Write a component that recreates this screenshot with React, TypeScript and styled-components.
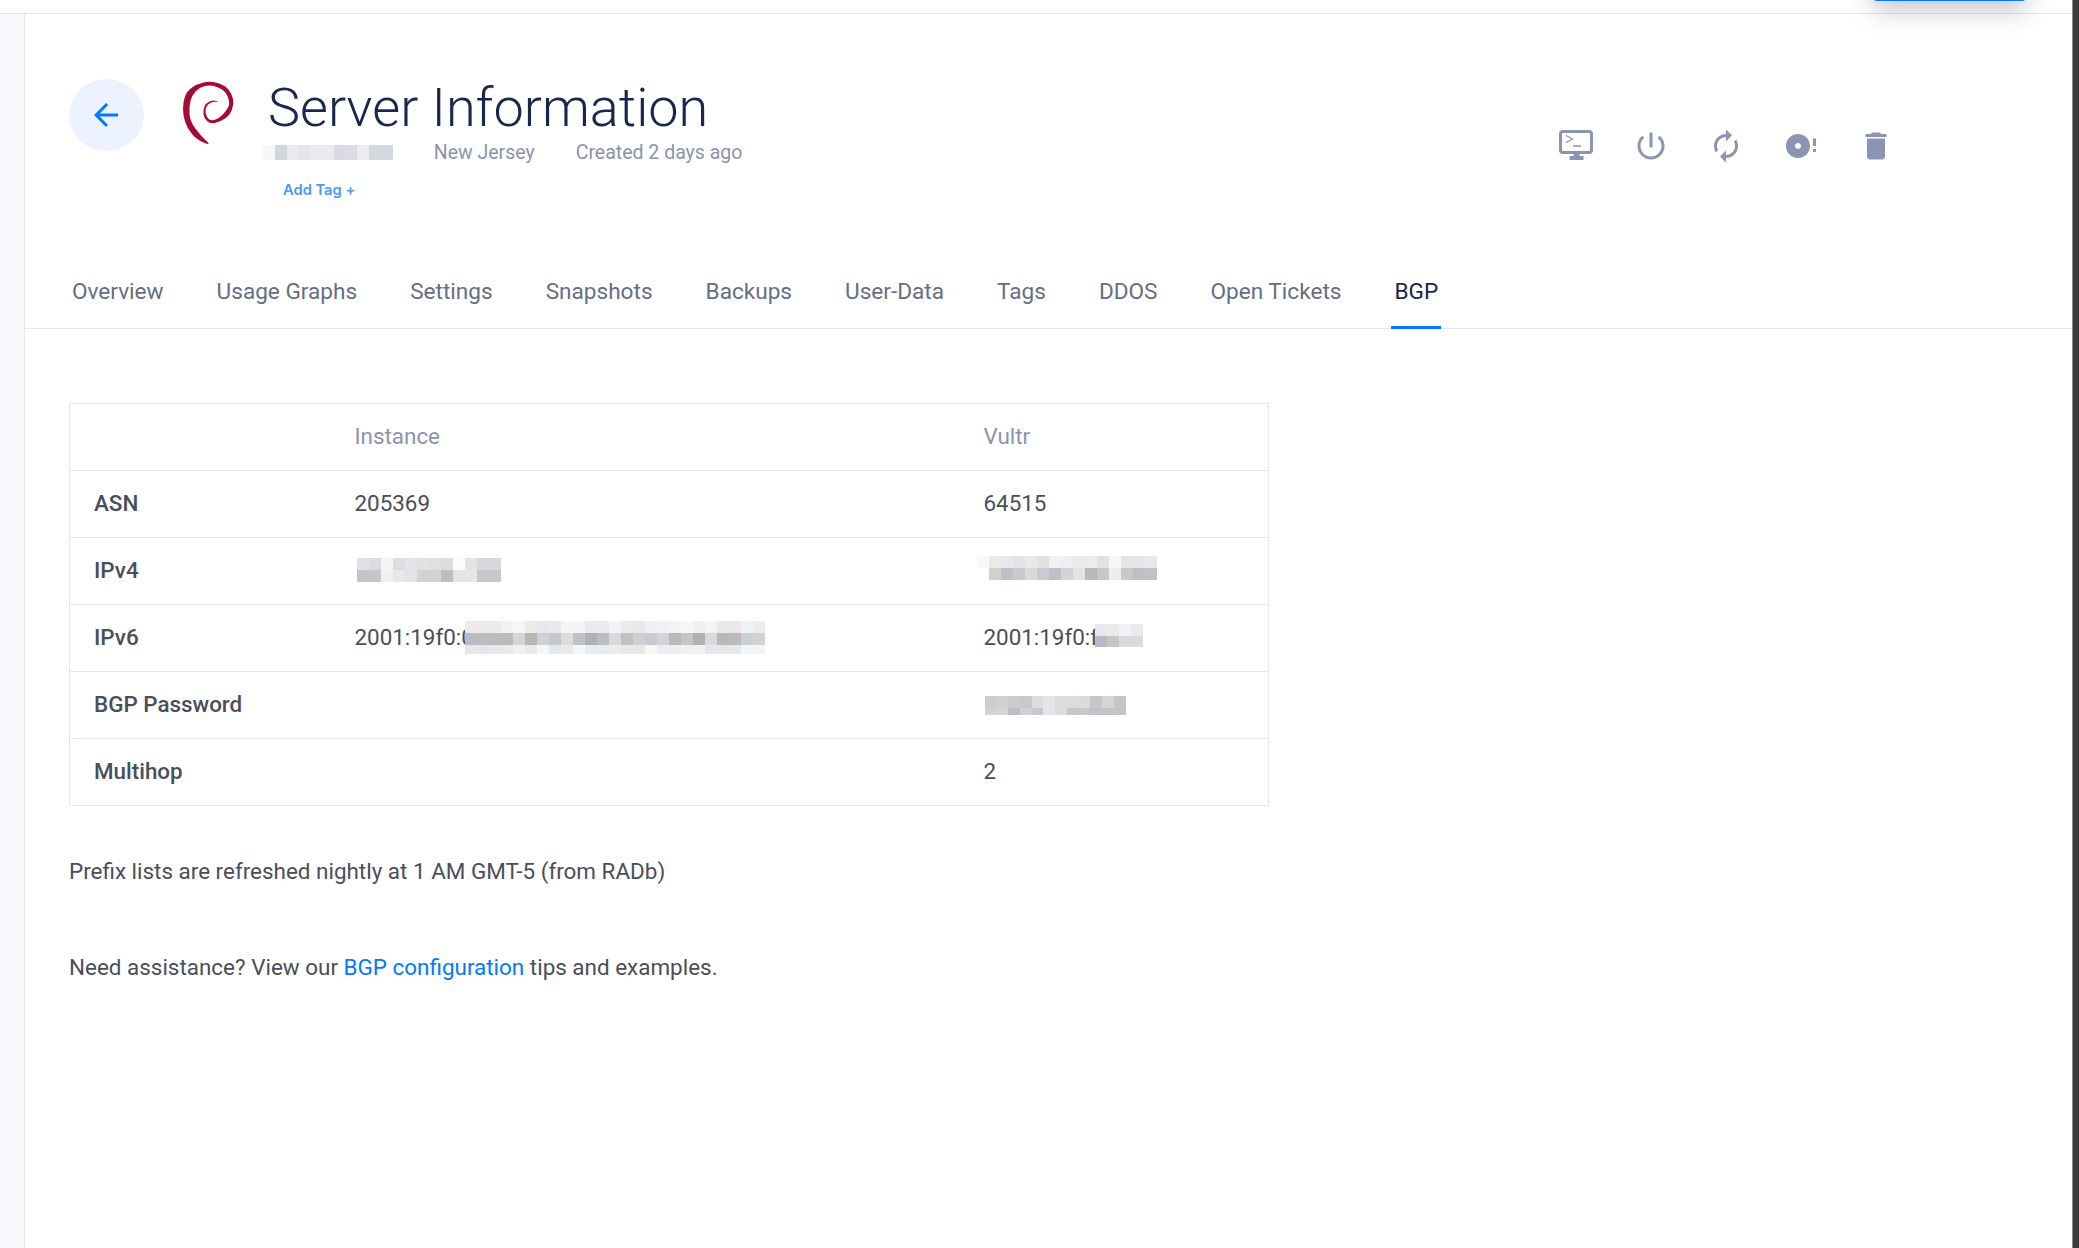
import { createGlobalStyle } from "styled-components";
import styled from "styled-components";
import { MdArrowBack, MdAutorenew, MdDelete, MdDiscFull, MdPowerSettingsNew } from "react-icons/md";

const TABS = ["Overview", "Usage Graphs", "Settings", "Snapshots", "Backups", "User-Data", "Tags", "DDOS", "Open Tickets", "BGP"];

// redacted values in the screenshot, one hex list per mosaic row
const HEADER_BLUR = [
  "f7f7f7 d2d6de e8ebf0 e2e5ec e8eaef e8eaf0 d8dbe3 d9dce4 eaecf0 d3d7e0 d3d7e0",
];
const IPV4_LEFT = [
  "e0e1e4 dadbde f4f4f5 dcdde0 e3e4e8 e2e2e3 e0e0e2 dcdde1 fbfbfb e4e4e4 d8d8da d8d8da",
  "c4c4c8 c6c6c8 f0f0ee e8e8e8 e2e3e6 d2d3d1 d2d2d0 bebec2 e4e4e8 e6e6e4 c8c8cc c8c8cc",
];
const IPV4_RIGHT = [
  "faf8f7 e9eaea e8e8ea e1e3e7 e8e8e9 e2e2e3 f1f1f1 efeff1 ebebec ececec e2e2e3 f6f6f6 e5e5e5 e5e6e9 e7e8e7",
  "ffffff d3cfcd bec2c8 c8cace d9d9da c9cbd0 bec0c6 d2d4d7 e2e3e5 b8b8ba c8c8c6 ededee c9c9c8 bec0c4 c0c2c6",
];
const IPV6_LEFT = [
  "ebebeb ebebeb ebebeb f1f2f2 f6f6f6 ebebec e6e7ea e9e9ea f5f5f6 f3f4f6 eaebec eaebeb f3f4f6 ebebec e9e9ea eff0f1 f0f1f2 f2f3f3 f6f6f6 eff0f1 f4f5f6 e9e9ea e9e9ea f0f2f4 ecedee",
  "b9bbc0 babcc2 babbbf bcbbbb d4d5da b9b5b6 cdd1d8 c6c7cd dcdcdc bfc1c4 adb2b9 bcbdc0 d8d9dc c2c1c1 cfd0d3 c8ccd2 d2d3d8 b9b8bb c5c6c9 b1b0b3 d9dadc b9b7b8 bcbaba c7d0d6 d3d3d3",
  "e7e7e8 e5e6e7 e7e8e8 e9e9ea f0f0ee e8e9ec f5f6f6 e6e7ea eaeaec f5f6f8 eaebec e9eaeb eaebed e7e7e8 e8e8e9 f6f7f7 edeef0 eeeeef eff0f0 f2f2f3 e6e7ea e7e7ea e6e7e9 f3f5f7 f5f5f6",
];
const IPV6_RIGHT = ["e8e9ec e9eaec f0f1f2 eaeaec", "b8bbc6 c8c6c0 d8dae0 d8dae0"];
const PASSWORD = [
  "cdcdcd d0d1d4 c9cbce c8c9cc dcdde0 e3e5e7 dcdde0 dcdcdc d9dcdc c6c7ca d4d5d8 c8c6c4",
  "d5d2d0 d2d4d8 bdbec3 cfd0d3 c6c9d0 e4e5e7 dedcd8 c6c7ca c8c8ca c2c3c6 c2c3c6 c6c3c0",
];

const SWIRL = [
  [52, 86], [37, 80], [27, 68], [23, 55], [23, 42], [27, 31], [37, 24], [50, 21], [65, 25], [72, 34], [74, 44], [70, 55],
  [60, 62], [50, 64], [44, 58], [43, 50], [46, 43], [53, 40], [60, 42], [53, 41.5], [47.5, 44.5], [45, 50], [46.5, 57], [51, 61],
  [59, 58.5], [67, 50], [70, 43], [66, 32], [58, 27], [50, 25], [40, 27], [32, 35], [29, 47], [30, 61], [40, 75],
];

const swirlPath = () => {
  const mid = (a: number[], b: number[]) => `${(a[0] + b[0]) / 2} ${(a[1] + b[1]) / 2}`;
  let d = `M${mid(SWIRL[SWIRL.length - 1], SWIRL[0])}`;
  SWIRL.forEach((p, i) => {
    d += ` Q${p[0]} ${p[1]} ${mid(p, SWIRL[(i + 1) % SWIRL.length])}`;
  });
  return d + "Z";
};

const Mosaic = ({ rows, cell = 12, heights, raise = 0 }: { rows: string[]; cell?: number; heights: string; raise?: number }) => (
  <MosaicGrid $cell={cell} $cols={rows[0].split(" ").length} $heights={heights} $raise={raise}>
    {rows.flatMap((row, r) =>
      row.split(" ").map((hex, c) => <i key={`${r}-${c}`} style={{ background: `#${hex}` }} />)
    )}
  </MosaicGrid>
);

const App = () => {
  return (
    <Page>
      <GlobalStyle />
      <Content>
        <TopBar>
          <NewButton />
        </TopBar>
        <Body>
          <Sidebar />
          <Main>
            <Header>
              <BackButton>
                <MdArrowBack size={36} />
              </BackButton>
              <Logo viewBox="0 0 60 70">
                <path d={swirlPath()} transform="translate(-23 -22)" fill="#a80a35" />
              </Logo>
              <TitleBlock>
                <Title>Server Information</Title>
                <Meta>
                  <Mosaic rows={HEADER_BLUR} cell={11.8} heights="15px" />
                  <span>New Jersey</span>
                  <span>Created 2 days ago</span>
                </Meta>
                <AddTag>Add Tag +</AddTag>
              </TitleBlock>
              <Actions>
                <svg viewBox="0 0 36 36" width={36} height={36}>
                  <rect x="2.5" y="3.5" width="31" height="21" rx="2.5" fill="none" stroke="currentColor" strokeWidth="3" />
                  <path d="M15.5 25h6v3h4v4h-14v-4h4z" fill="currentColor" />
                  <path d="M8 7.5l6.5 3.5-6.5 3.5M15 18h8" fill="none" stroke="currentColor" strokeWidth="1.3" />
                </svg>
                <MdPowerSettingsNew size={36} />
                <MdAutorenew size={36} />
                <MdDiscFull size={36} />
                <MdDelete size={36} />
              </Actions>
            </Header>

            <Tabs>
              {TABS.map((tab) => (
                <Tab key={tab} $active={tab === "BGP"}>
                  {tab}
                </Tab>
              ))}
            </Tabs>

            <Section>
              <BgpTable>
                <colgroup>
                  <col width={261} />
                  <col width={629} />
                  <col />
                </colgroup>
                <thead>
                  <tr>
                    <th />
                    <th>Instance</th>
                    <th>Vultr</th>
                  </tr>
                </thead>
                <tbody>
                  <tr>
                    <RowLabel>ASN</RowLabel>
                    <td>205369</td>
                    <td>64515</td>
                  </tr>
                  <tr>
                    <RowLabel>IPv4</RowLabel>
                    <td>
                      <Redacted $left={2}>
                        <Mosaic rows={IPV4_LEFT} heights="12px 12px" />
                      </Redacted>
                    </td>
                    <td>
                      <Redacted $left={-7}>
                        <Mosaic rows={IPV4_RIGHT} heights="12px 12px" raise={2} />
                      </Redacted>
                    </td>
                  </tr>
                  <tr>
                    <RowLabel>IPv6</RowLabel>
                    <td>
                      <Redacted>
                        <CoveredText $width={110}>2001:19f0:0</CoveredText>
                        <Mosaic rows={IPV6_LEFT} heights="12px 12px 9px" />
                      </Redacted>
                    </td>
                    <td>
                      <Redacted>
                        <CoveredText $width={111}>2001:19f0:f</CoveredText>
                        <Mosaic rows={IPV6_RIGHT} heights="12px 11px" raise={2} />
                      </Redacted>
                    </td>
                  </tr>
                  <tr>
                    <RowLabel>BGP Password</RowLabel>
                    <td />
                    <td>
                      <Redacted $left={1}>
                        <Mosaic rows={PASSWORD} cell={11.75} heights="12px 7px" raise={-1} />
                      </Redacted>
                    </td>
                  </tr>
                  <tr>
                    <RowLabel>Multihop</RowLabel>
                    <td />
                    <td>2</td>
                  </tr>
                </tbody>
              </BgpTable>

              <Note>Prefix lists are refreshed nightly at 1 AM GMT-5 (from RADb)</Note>
              <Note>
                Need assistance? View our <DocLink href="#">BGP configuration</DocLink> tips and examples.
              </Note>
            </Section>
          </Main>
        </Body>
      </Content>
      <Scrollbar />
    </Page>
  );
};

const GlobalStyle = createGlobalStyle`
  html, body {
    margin: 0;
    padding: 0;
    background: #fff;
    overflow: hidden;
  }
  * {
    box-sizing: border-box;
  }
`;

const Page = styled.div`
  display: flex;
  width: 2079px;
  height: 1248px;
  overflow: hidden;
  font-family: Roboto, "Liberation Sans", sans-serif;
  font-size: 22.4px;
  color: #4a4e5a;
`;

const Content = styled.div`
  flex: 1;
  display: flex;
  flex-direction: column;
  min-width: 0;
`;

const Scrollbar = styled.div`
  width: 7px;
  background: #3b3b3b;
  border-left: 1px solid #8a8a8a;
`;

const TopBar = styled.div`
  position: relative;
  height: 14px;
  flex: none;
  border-bottom: 1px solid #e5e6e9;
`;

const NewButton = styled.div`
  position: absolute;
  left: 1873px;
  bottom: 12px;
  width: 153px;
  height: 40px;
  border-radius: 4px;
  background: #007bfc;
  box-shadow: 0 10px 24px rgba(40, 50, 70, 0.26);
`;

const Body = styled.div`
  flex: 1;
  display: flex;
  min-height: 0;
`;

const Sidebar = styled.div`
  width: 25px;
  flex: none;
  background: #f8f9fd;
  border-right: 1px solid #e6e8ee;
`;

const Main = styled.main`
  flex: 1;
  min-width: 0;
`;

const Header = styled.div`
  display: flex;
  align-items: flex-start;
  padding: 65px 178px 0 44px;
  height: 242px;
`;

const BackButton = styled.div`
  flex: none;
  display: flex;
  align-items: center;
  justify-content: center;
  width: 75px;
  height: 72px;
  padding-right: 1px;
  border-radius: 50%;
  background: #ecf3ff;
  color: #007bfc;
`;

const Logo = styled.svg`
  flex: none;
  width: 60px;
  height: 70px;
  margin: 3px 0 0 39px;
  overflow: visible;
`;

const TitleBlock = styled.div`
  margin: -1px 0 0 20px;
`;

const Title = styled.h1`
  margin: 0;
  padding-left: 5px;
  font-size: 54px;
  line-height: 60px;
  font-weight: 300;
  color: #19274f;
`;

const Meta = styled.div`
  display: flex;
  align-items: center;
  gap: 41px;
  height: 28px;
  font-size: 19.5px;
  color: #8a94ad;
`;

const MosaicGrid = styled.span<{ $cell: number; $cols: number; $heights: string; $raise: number }>`
  position: relative;
  display: inline-grid;
  flex: none;
  grid-template-columns: repeat(${(p) => p.$cols}, ${(p) => p.$cell}px);
  grid-template-rows: ${(p) => p.$heights};
  margin-bottom: ${(p) => Math.max(p.$raise, 0) * 2}px;
  margin-top: ${(p) => Math.max(-p.$raise, 0) * 2}px;

  i {
    display: block;
  }
`;

const AddTag = styled.div`
  margin: 14px 0 0 20px;
  font-family: Inter, sans-serif;
  font-size: 14.7px;
  line-height: 20px;
  font-weight: 600;
  color: #4f95ff;
`;

const Actions = styled.div`
  display: flex;
  gap: 39px;
  margin: 49px 0 0 auto;
  color: #8b95b3;
`;

const Tabs = styled.nav`
  display: flex;
  gap: 47px;
  height: 73px;
  padding: 0 0 0 44px;
  font-size: 22.6px;
  border-bottom: 1px solid #e6e8ee;
`;

const Tab = styled.div<{ $active?: boolean }>`
  height: 73px;
  padding: 0 3px;
  line-height: 72px;
  color: ${(p) => (p.$active ? "#19274f" : "#666e82")};
  border-bottom: 3px solid ${(p) => (p.$active ? "#007bfc" : "transparent")};
`;

const Section = styled.section`
  padding: 74px 0 0 44px;
`;

const BgpTable = styled.table`
  width: 1200px;
  table-layout: fixed;
  border-collapse: collapse;

  th,
  td {
    height: 67px;
    padding: 0 24px 2px;
    border: 1px solid #e6e8ee;
    border-left: 0;
    border-right: 0;
    text-align: left;
    font-weight: 400;
  }

  th {
    color: #8a94ad;
  }

  th:first-child,
  td:first-child {
    border-left: 1px solid #e6e8ee;
  }

  th:last-child,
  td:last-child {
    border-right: 1px solid #e6e8ee;
  }
`;

const RowLabel = styled.td`
  && {
    font-weight: 500;
  }
`;

const Redacted = styled.span<{ $left?: number }>`
  display: flex;
  align-items: center;
  margin-left: ${(p) => p.$left ?? 0}px;
`;

// the redaction in the screenshot sits on top of the end of the address
const CoveredText = styled.span<{ $width: number }>`
  flex: none;
  width: ${(p) => p.$width}px;
  white-space: nowrap;
`;

const Note = styled.p`
  margin: 52px 0 0;
  font-size: 22.45px;
  line-height: 26px;

  & + & {
    margin-top: 70px;
  }
`;

const DocLink = styled.a`
  color: #007bff;
  text-decoration: none;
`;

export default App;
